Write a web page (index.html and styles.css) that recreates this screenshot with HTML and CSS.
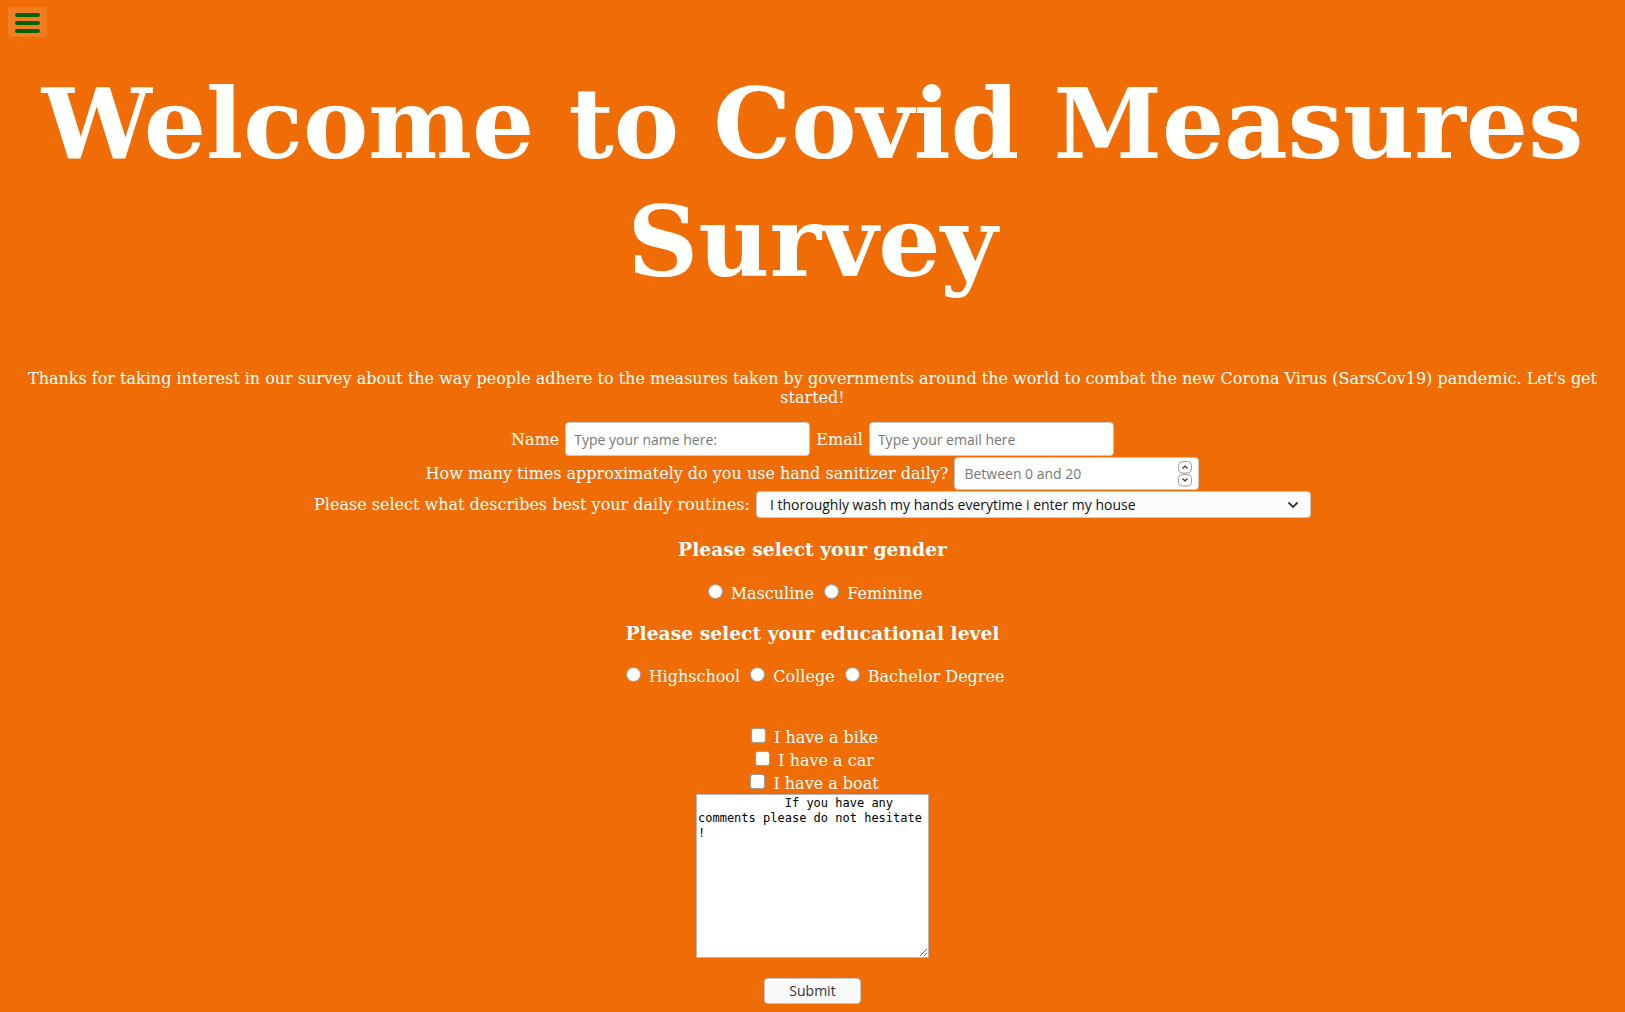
FILE: index.html
```html
<!DOCTYPE html>
<html lang="en">
<head>
<meta charset="utf-8">
<title>Covid Measures Survey</title>
<link rel="stylesheet" href="styles.css">
</head>
<body>
<button class="menu-btn" type="button" aria-label="Menu"><span class="bar"></span><span class="bar"></span><span class="bar"></span></button>
<h1 class="title">Welcome to Covid Measures Survey</h1>
<p class="intro">Thanks for taking interest in our survey about the way people adhere to the measures taken by governments around the world to combat the new Corona Virus (SarsCov19) pandemic. Let's get started!</p>
<form class="survey">
  <div class="row row-name">
    <label for="name">Name</label>
    <input id="name" class="field" type="text" placeholder="Type your name here:">
    <label for="email">Email</label>
    <input id="email" class="field" type="email" placeholder="Type your email here">
  </div>
  <div class="row row-number">
    <label for="number">How many times approximately do you use hand sanitizer daily?</label>
    <span class="number-wrap">
      <input id="number" class="field field-number" type="number" min="0" max="20" placeholder="Between 0 and 20">
      <svg class="spin" width="14" height="26" viewBox="0 0 14 26" aria-hidden="true">
        <rect x="0.5" y="0.5" width="13" height="11.5" rx="4" fill="#fff" stroke="#9a9a9a"/>
        <rect x="0.5" y="13.5" width="13" height="11.5" rx="4" fill="#fff" stroke="#9a9a9a"/>
        <path d="M4.5 7.5 L7 5 L9.5 7.5" fill="none" stroke="#333" stroke-width="1.2"/>
        <path d="M4.5 17.5 L7 20 L9.5 17.5" fill="none" stroke="#333" stroke-width="1.2"/>
      </svg>
    </span>
  </div>
  <div class="row row-select">
    <label for="routine">Please select what describes best your daily routines:</label>
    <span class="select-wrap">
      <select id="routine" class="dropdown">
        <option>I thoroughly wash my hands everytime i enter my house</option>
        <option>I always wear a mask outside</option>
        <option>I keep my distance from other people</option>
      </select>
      <svg class="chevron" width="12" height="8" viewBox="0 0 12 8" aria-hidden="true">
        <path d="M1.5 1.5 L6 6 L10.5 1.5" fill="none" stroke="#333" stroke-width="1.8"/>
      </svg>
    </span>
  </div>

  <h3 class="group-title first">Please select your gender</h3>
  <div class="choice-row">
    <input type="radio" class="radio" name="gender" id="masc"> <label for="masc">Masculine</label>
    <input type="radio" class="radio" name="gender" id="fem"> <label for="fem">Feminine</label>
  </div>

  <h3 class="group-title">Please select your educational level</h3>
  <div class="choice-row">
    <input type="radio" class="radio" name="edu" id="hs"> <label for="hs">Highschool</label>
    <input type="radio" class="radio" name="edu" id="col"> <label for="col">College</label>
    <input type="radio" class="radio" name="edu" id="bach"> <label for="bach">Bachelor Degree</label>
  </div>

  <div class="checks">
    <div class="check-line"><input type="checkbox" class="check" id="bike"> <label for="bike">I have a bike</label></div>
    <div class="check-line"><input type="checkbox" class="check" id="car"> <label for="car">I have a car</label></div>
    <div class="check-line"><input type="checkbox" class="check" id="boat"> <label for="boat">I have a boat</label></div>
  </div>

  <textarea class="comments" name="comments">            If you have any comments please do not hesitate !</textarea>

  <div class="submit-row"><button type="submit" class="submit">Submit</button></div>
</form>
</body>
</html>
```

FILE: styles.css
```css
* {
  box-sizing: border-box;
}

html {
  background: #f06c05;
}

body {
  margin: 8px;
  font-family: "DejaVu Serif", serif;
  font-size: 16px;
  color: #fff;
}

.menu-btn {
  position: fixed;
  top: 7px;
  left: 8px;
  width: 39px;
  height: 30px;
  padding: 6px 0 0;
  border: 0;
  background: #f27d20;
  display: flex;
  flex-direction: column;
  align-items: center;
  gap: 4px;
  cursor: pointer;
}

.bar {
  display: block;
  width: 25px;
  height: 4px;
  border-radius: 2px;
  background: #006400;
}

.title {
  font-size: 98px;
  font-weight: bold;
  line-height: 118px;
  text-align: center;
  margin: 57.4px 0 67.8px;
}

.intro {
  text-align: center;
  margin: 16px 0 0;
}

.survey {
  margin: 0;
}

.row {
  display: flex;
  justify-content: center;
  align-items: center;
  gap: 6px;
}

.row-name {
  margin-top: 15px;
  height: 34px;
}

.row-number {
  margin-top: 1px;
  height: 33px;
}

.row-select {
  margin-top: 1px;
  height: 27px;
}

.field {
  width: 245px;
  height: 34px;
  margin: 0;
  padding: 0 8px;
  border: 1px solid #c8c8c8;
  border-radius: 4px;
  background: #fff;
  font-family: "Open Sans", "Noto Sans", sans-serif;
  font-size: 14px;
  color: #222;
  outline: none;
}

.field::placeholder {
  color: #777;
}

.number-wrap,
.select-wrap {
  position: relative;
  display: block;
}

.field-number {
  height: 33px;
  padding-left: 9px;
  -moz-appearance: textfield;
  appearance: textfield;
}

.field-number::-webkit-inner-spin-button,
.field-number::-webkit-outer-spin-button {
  -webkit-appearance: none;
  margin: 0;
}

.spin {
  position: absolute;
  right: 7px;
  top: 4px;
  pointer-events: none;
}

.dropdown {
  display: block;
  width: 555px;
  height: 27px;
  margin: 0;
  padding: 0 30px 0 13px;
  border: 1px solid #c8c8c8;
  border-radius: 4px;
  background: #fcfcfc;
  font-family: "Open Sans", "Noto Sans", sans-serif;
  font-size: 14px;
  color: #111;
  -webkit-appearance: none;
  appearance: none;
  outline: none;
}

.chevron {
  position: absolute;
  right: 12px;
  top: 10px;
  pointer-events: none;
}

.group-title {
  font-size: 18.72px;
  font-weight: bold;
  line-height: 22px;
  text-align: center;
  margin: 18.1px 0 23.4px;
}

.group-title.first {
  margin-top: 20.3px;
}

.choice-row {
  text-align: center;
  line-height: 20px;
}

.radio {
  -webkit-appearance: none;
  appearance: none;
  display: inline-block;
  vertical-align: baseline;
  width: 15px;
  height: 15px;
  margin: 0 3px 0 5px;
  border: 1px solid #9c9c9c;
  border-radius: 50%;
  background: #fff;
  box-shadow: inset 0 1px 1px rgba(0, 0, 0, 0.08);
}

.checks {
  margin-top: 37.3px;
}

.check-line {
  text-align: center;
  line-height: 21px;
}

.check {
  -webkit-appearance: none;
  appearance: none;
  display: inline-block;
  vertical-align: baseline;
  width: 15px;
  height: 15px;
  margin: 3px 3px 0 4px;
  border: 1px solid #9c9c9c;
  border-radius: 3px;
  background: #fff;
}

.comments {
  display: block;
  width: 233px;
  height: 164px;
  margin: 0 auto;
  padding: 1px 1px;
  border: 1px solid #b5b5b5;
  background: #fff;
  font-family: "DejaVu Sans Mono", monospace;
  font-size: 12px;
  line-height: 15px;
  color: #000;
  resize: both;
  outline: none;
}

.submit-row {
  text-align: center;
  margin-top: 20px;
}

.submit {
  width: 97px;
  height: 26px;
  margin: 0;
  padding: 0;
  border: 1px solid #c4c4c4;
  border-radius: 4px;
  background: #fafafa;
  font-family: "Open Sans", "Noto Sans", sans-serif;
  font-size: 14px;
  color: #333;
  cursor: pointer;
}
```
